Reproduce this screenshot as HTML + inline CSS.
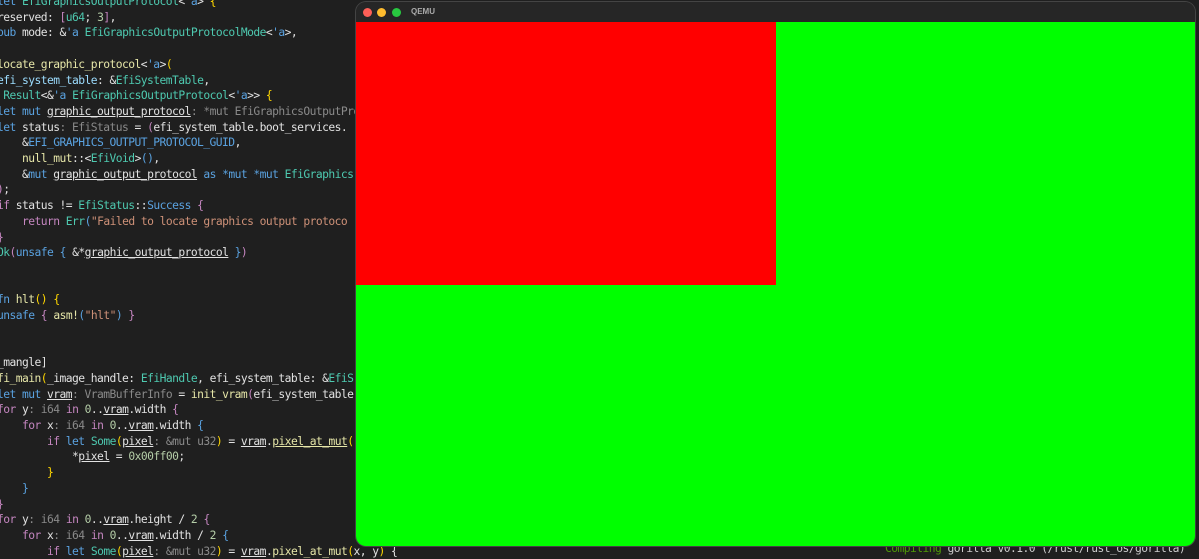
<!DOCTYPE html>
<html><head><style>
body{margin:0;width:1199px;height:556px;background:#1f1f1f;overflow:hidden;position:relative;font-family:"DejaVu Sans Mono","Liberation Mono",monospace;}
#code{position:absolute;left:-3px;top:-6px;font-size:11.3px;letter-spacing:-0.55px;line-height:15.7px;color:#e2e2e2;white-space:pre;}
.k{color:#5aa2e0}.c{color:#c586c0}.t{color:#4ec9b0}.f{color:#e6e6a8}.s{color:#ce9178}.v{color:#9cdcfe}.y{color:#ffd700}.g{color:#8a8a8a}.n{color:#b5cea8}.u{text-decoration:underline}
#win{position:absolute;left:356px;top:2px;width:839px;height:544px;background:#262626;border-radius:10px;overflow:hidden;box-shadow:0 0 0 1px #444;}
#tb{height:20px;background:#262626;position:relative}
.d{position:absolute;top:6px;width:9px;height:9px;border-radius:50%}
#green{position:absolute;left:0;top:20px;right:0;bottom:0;background:#00ff00}
#red{position:absolute;left:0;top:20px;width:420px;height:263px;background:#ff0000}
#term{position:absolute;left:885px;top:542px;font-size:11.3px;letter-spacing:-0.55px;color:#ccc;white-space:pre}
</style></head><body>
<div id="code"><span class="k">let</span> <span class="t">EfiGraphicsOutputProtocol</span>&lt;<span class="k">'a</span>&gt; <span class="y">{</span>
reserved: <span class="c">[</span><span class="t">u64</span>; <span class="n">3</span><span class="c">]</span>,
<span class="k">pub</span> mode: &amp;<span class="k">'a</span> <span class="t">EfiGraphicsOutputProtocolMode</span>&lt;<span class="k">'a</span>&gt;,

<span class="f">locate_graphic_protocol</span>&lt;<span class="k">'a</span>&gt;<span class="y">(</span>
<span class="v">efi_system_table</span>: &amp;<span class="t">EfiSystemTable</span>,
 <span class="t">Result</span>&lt;&amp;<span class="k">'a</span> <span class="t">EfiGraphicsOutputProtocol</span>&lt;<span class="k">'a</span>&gt;&gt; <span class="y">{</span>
<span class="k">let mut</span> <span class="u">graphic_output_protocol</span><span class="g">: *mut EfiGraphicsOutputPro</span>
<span class="k">let</span> status<span class="g">: EfiStatus</span> = <span class="c">(</span>efi_system_table.boot_services.
    &amp;<span class="k">EFI_GRAPHICS_OUTPUT_PROTOCOL_GUID</span>,
    <span class="f">null_mut</span>::&lt;<span class="t">EfiVoid</span>&gt;<span class="k">()</span>,
    &amp;<span class="k">mut</span> <span class="u">graphic_output_protocol</span> <span class="k">as</span> <span class="k">*mut *mut</span> <span class="t">EfiGraphics</span>
<span class="c">)</span>;
<span class="c">if</span> status != <span class="t">EfiStatus</span>::<span class="k">Success</span> <span class="c">{</span>
    <span class="c">return</span> <span class="t">Err</span><span class="k">(</span><span class="s">"Failed to locate graphics output protoco</span>
<span class="c">}</span>
<span class="t">Ok</span><span class="c">(</span><span class="k">unsafe</span> <span class="k">{</span> &amp;*<span class="u">graphic_output_protocol</span> <span class="k">}</span><span class="c">)</span>


<span class="k">fn</span> <span class="f">hlt</span><span class="y">()</span> <span class="y">{</span>
<span class="k">unsafe</span> <span class="c">{</span> <span class="f">asm!</span><span class="k">(</span><span class="s">"hlt"</span><span class="k">)</span> <span class="c">}</span>


_mangle]
<span class="f">fi_main</span><span class="y">(</span>_image_handle: <span class="t">EfiHandle</span>, efi_system_table: &amp;<span class="t">EfiS</span>
<span class="k">let mut</span> <span class="u">vram</span><span class="g">: VramBufferInfo</span> = <span class="f">init_vram</span><span class="c">(</span>efi_system_table
<span class="c">for</span> y<span class="g">: i64</span> <span class="c">in</span> <span class="n">0</span>..<span class="u">vram</span>.width <span class="c">{</span>
    <span class="c">for</span> x<span class="g">: i64</span> <span class="c">in</span> <span class="n">0</span>..<span class="u">vram</span>.width <span class="k">{</span>
        <span class="c">if</span> <span class="k">let</span> <span class="t">Some</span><span class="y">(</span><span class="u">pixel</span><span class="g">: &amp;mut u32</span><span class="y">)</span> = <span class="u">vram</span>.<span class="f u">pixel_at_mut</span><span class="y">(</span>
            *<span class="u">pixel</span> = <span class="n">0x00ff00</span>;
        <span class="y">}</span>
    <span class="k">}</span>
<span class="c">}</span>
<span class="c">for</span> y<span class="g">: i64</span> <span class="c">in</span> <span class="n">0</span>..<span class="u">vram</span>.height / <span class="n">2</span> <span class="c">{</span>
    <span class="c">for</span> x<span class="g">: i64</span> <span class="c">in</span> <span class="n">0</span>..<span class="u">vram</span>.width / <span class="n">2</span> <span class="k">{</span>
        <span class="c">if</span> <span class="k">let</span> <span class="t">Some</span><span class="y">(</span><span class="u">pixel</span><span class="g">: &amp;mut u32</span><span class="y">)</span> = <span class="u">vram</span>.<span class="f">pixel_at_mut</span><span class="y">(</span>x, y<span class="y">)</span> {</div>
<div id="term"><span style="color:#4e9a06">Compiling</span> gorilla v0.1.0 (/rust/rust_os/gorilla)</div>
<div id="win">
<div id="tb"><div class="d" style="left:7px;background:#fe5f57"></div><div class="d" style="left:21px;background:#febc2e"></div><div class="d" style="left:36px;background:#28c840"></div><span style="position:absolute;left:55px;top:5px;font:bold 8px 'Liberation Sans',sans-serif;color:#aaa">QEMU</span></div>
<div id="green"></div><div id="red"></div>
</div>
</body></html>
